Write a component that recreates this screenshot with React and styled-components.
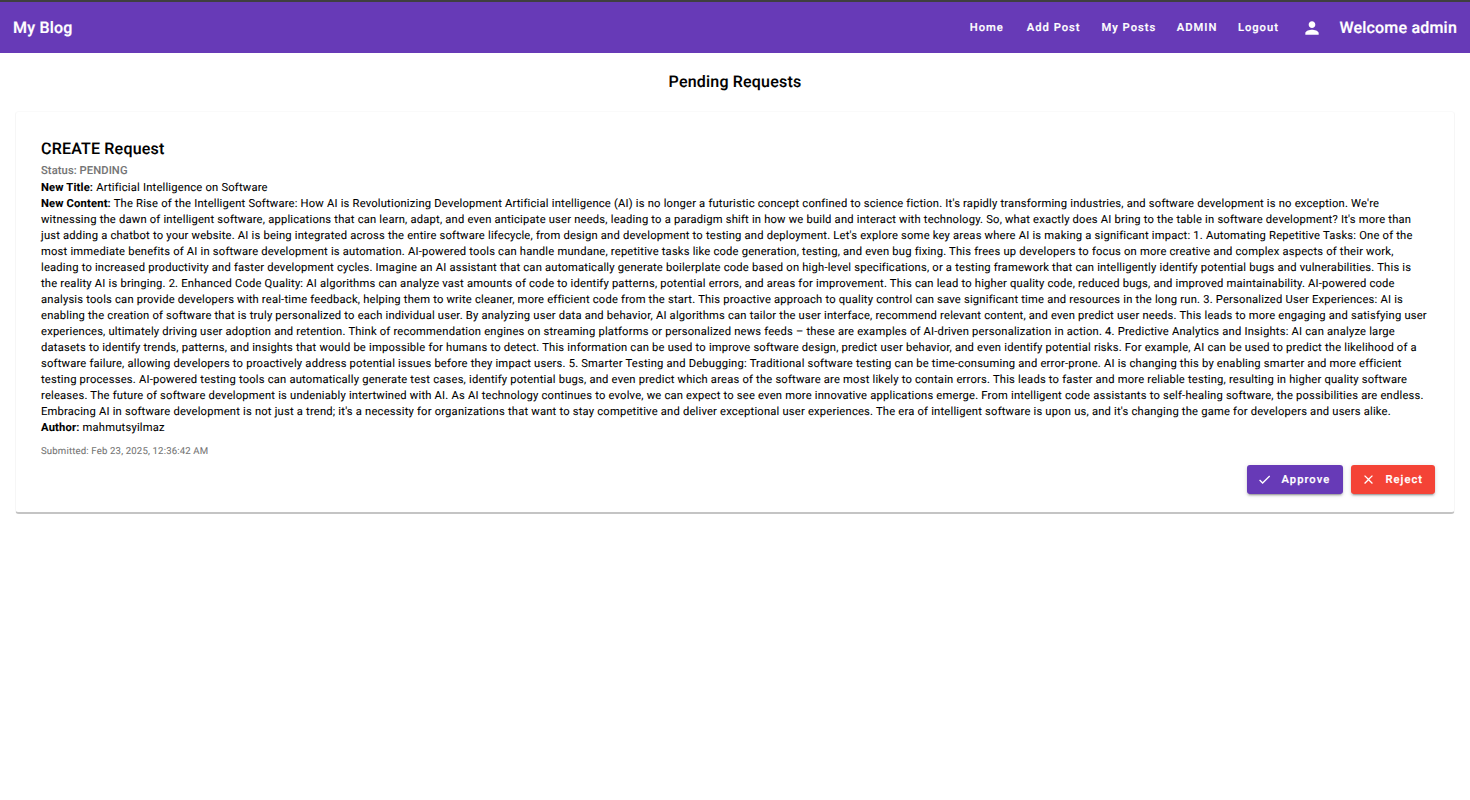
import React from 'react';
import styled, { createGlobalStyle } from 'styled-components';
import { MdPerson, MdCheck, MdClose } from 'react-icons/md';

const Global = createGlobalStyle`
  * { box-sizing: border-box; }
  body { margin: 0; background: #fff; font-family: Roboto, "Liberation Sans", sans-serif; color: #000; text-rendering: geometricPrecision; -webkit-text-stroke: .08px currentColor; }
`;

const Toolbar = styled.header`
  display: flex;
  align-items: center;
  justify-content: space-between;
  height: 53px;
  padding: 1px 13px 0;
  background: #673ab7;
  border-top: 2px solid #3f3f3f;
  color: #fff;
  -webkit-text-stroke-width: .2px;
`;

const Brand = styled.span`
  font-size: 16px;
  font-weight: 500;
  line-height: 26px;
  letter-spacing: .2px;
  white-space: nowrap;
`;

const Nav = styled.nav`
  display: flex;
  align-items: center;
`;

const NavLink = styled.a`
  padding-bottom: 1px;
  font-size: 11.2px;
  font-weight: 500;
  letter-spacing: 1px;
  margin-right: ${(p) => p.$gap}px;
  white-space: nowrap;
`;

const PersonIcon = styled(MdPerson)`
  width: 20px;
  height: 20px;
  margin-right: 17px;
  margin-bottom: 1px;
  stroke: none;
`;

const Heading = styled.h1`
  margin: 16px 0;
  text-align: center;
  font-size: 16px;
  font-weight: 500;
  line-height: 26px;
  letter-spacing: .2px;
`;

const Card = styled.section`
  margin: 0 15px;
  height: 403px;
  padding: 24px 19px 0 25px;
  border: 1px solid #f6f6f6;
  border-top-color: #fafafa;
  border-bottom: 2px solid #c4c4c4;
  border-radius: 4px;
`;

const CardTitle = styled.h2`
  margin: 0;
  font-size: 16px;
  font-weight: 500;
  line-height: 26px;
  letter-spacing: .2px;
`;

const Status = styled.p`
  margin: 0 0 1px;
  font-size: 11.2px;
  font-weight: 500;
  line-height: 17px;
  letter-spacing: .08px;
  color: #757575;
`;

const Details = styled.div`
  font-size: 11.2px;
  line-height: 16px;
  letter-spacing: .203px;
  white-space: nowrap;
  b { font-weight: 700; letter-spacing: .17px; }
`;

const Line = styled.div`
  height: 16px;
`;

const Submitted = styled.div`
  margin-top: 8px;
  font-size: 9.6px;
  line-height: 16px;
  letter-spacing: .16px;
  color: #757575;
`;

const Actions = styled.div`
  display: flex;
  justify-content: flex-end;
  gap: 8px;
  margin-top: 5px;
`;

const Button = styled.button`
  display: flex;
  align-items: center;
  width: ${(p) => p.$width}px;
  height: 29px;
  padding: 0 0 0 9.5px;
  border: 0;
  border-radius: 3px;
  background: ${(p) => p.$color};
  color: #fff;
  font: 500 11.2px Roboto, sans-serif;
  text-rendering: inherit;
  letter-spacing: 1.03px;
  -webkit-text-stroke: .2px #fff;
  box-shadow: 0 3px 1px -2px rgba(0,0,0,.2), 0 2px 2px rgba(0,0,0,.14), 0 1px 5px rgba(0,0,0,.12);
  svg { width: 15px; height: 15px; margin-right: 10px; stroke: none; }
`;

const content = [
  "The Rise of the Intelligent Software: How AI is Revolutionizing Development Artificial intelligence (AI) is no longer a futuristic concept confined to science fiction. It's rapidly transforming industries, and software development is no exception. We're",
  "witnessing the dawn of intelligent software, applications that can learn, adapt, and even anticipate user needs, leading to a paradigm shift in how we build and interact with technology. So, what exactly does AI bring to the table in software development? It's more than",
  "just adding a chatbot to your website. AI is being integrated across the entire software lifecycle, from design and development to testing and deployment. Let's explore some key areas where AI is making a significant impact: 1. Automating Repetitive Tasks: One of the",
  "most immediate benefits of AI in software development is automation. AI-powered tools can handle mundane, repetitive tasks like code generation, testing, and even bug fixing. This frees up developers to focus on more creative and complex aspects of their work,",
  "leading to increased productivity and faster development cycles. Imagine an AI assistant that can automatically generate boilerplate code based on high-level specifications, or a testing framework that can intelligently identify potential bugs and vulnerabilities. This is",
  "the reality AI is bringing. 2. Enhanced Code Quality: AI algorithms can analyze vast amounts of code to identify patterns, potential errors, and areas for improvement. This can lead to higher quality code, reduced bugs, and improved maintainability. AI-powered code",
  "analysis tools can provide developers with real-time feedback, helping them to write cleaner, more efficient code from the start. This proactive approach to quality control can save significant time and resources in the long run. 3. Personalized User Experiences: AI is",
  "enabling the creation of software that is truly personalized to each individual user. By analyzing user data and behavior, AI algorithms can tailor the user interface, recommend relevant content, and even predict user needs. This leads to more engaging and satisfying user",
  "experiences, ultimately driving user adoption and retention. Think of recommendation engines on streaming platforms or personalized news feeds – these are examples of AI-driven personalization in action. 4. Predictive Analytics and Insights: AI can analyze large",
  "datasets to identify trends, patterns, and insights that would be impossible for humans to detect. This information can be used to improve software design, predict user behavior, and even identify potential risks. For example, AI can be used to predict the likelihood of a",
  "software failure, allowing developers to proactively address potential issues before they impact users. 5. Smarter Testing and Debugging: Traditional software testing can be time-consuming and error-prone. AI is changing this by enabling smarter and more efficient",
  "testing processes. AI-powered testing tools can automatically generate test cases, identify potential bugs, and even predict which areas of the software are most likely to contain errors. This leads to faster and more reliable testing, resulting in higher quality software",
  "releases. The future of software development is undeniably intertwined with AI. As AI technology continues to evolve, we can expect to see even more innovative applications emerge. From intelligent code assistants to self-healing software, the possibilities are endless.",
  "Embracing AI in software development is not just a trend; it's a necessity for organizations that want to stay competitive and deliver exceptional user experiences. The era of intelligent software is upon us, and it's changing the game for developers and users alike.",
];

export default function App() {
  return (
    <>
      <Global />
      <Toolbar>
        <Brand>My Blog</Brand>
        <Nav>
          <NavLink $gap={23}>Home</NavLink>
          <NavLink $gap={21}>Add Post</NavLink>
          <NavLink $gap={20.5}>My Posts</NavLink>
          <NavLink $gap={20.5}>ADMIN</NavLink>
          <NavLink $gap={23.5}>Logout</NavLink>
          <PersonIcon />
          <Brand>Welcome admin</Brand>
        </Nav>
      </Toolbar>
      <Heading>Pending Requests</Heading>
      <Card>
        <CardTitle>CREATE Request</CardTitle>
        <Status>Status: PENDING</Status>
        <Details>
          <Line><b>New Title:</b> Artificial Intelligence on Software</Line>
          {content.map((text, i) => (
            <Line key={i}>{i === 0 && <><b>New Content:</b>{' '}</>}{text}</Line>
          ))}
          <Line><b>Author:</b> mahmutsyilmaz</Line>
        </Details>
        <Submitted>Submitted: Feb 23, 2025, 12:36:42 AM</Submitted>
        <Actions>
          <Button $width={96} $color="#673ab7"><MdCheck />Approve</Button>
          <Button $width={84} $color="#f44336"><MdClose />Reject</Button>
        </Actions>
      </Card>
    </>
  );
}
